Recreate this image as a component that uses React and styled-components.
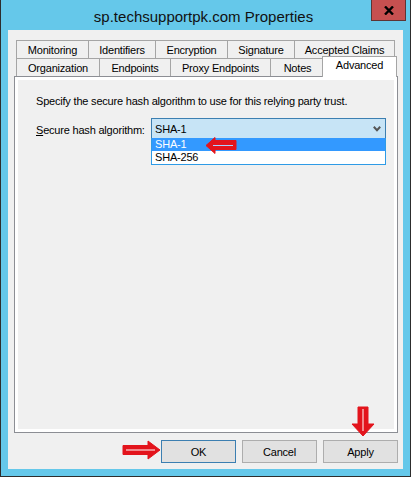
import React from 'react';
import styled, { createGlobalStyle } from 'styled-components';

const Global = createGlobalStyle`
  html, body { margin: 0; padding: 0; background: #65c8ea; }
  body { font-family: "Liberation Sans", Arial, sans-serif; color: #000; }
  * { box-sizing: border-box; }
`;

const Window = styled.div`
  width: 411px;
  height: 477px;
  background: #65c8ea;
  border: 1px solid #2d2d2d;
  border-top: none;
  display: flex;
  flex-direction: column;
`;

const TitleBar = styled.div`
  height: 30px;
  flex: none;
  display: grid;
  grid-template-columns: 1fr auto 1fr;
  padding-right: 4px;
`;

const Title = styled.div`
  grid-column: 2;
  align-self: center;
  padding-top: 2px;
  font-size: 15px;
  color: #111;
  white-space: nowrap;
`;

const CloseButton = styled.div`
  grid-column: 3;
  justify-self: end;
  align-self: start;
  width: 35px;
  height: 21px;
  background: #c75050;
  border: 1px solid #5e3434;
  border-top: none;
  display: flex;
  align-items: center;
  justify-content: center;
`;

const Client = styled.div`
  flex: 1;
  margin: 0 7px 7px;
  background: #f0f0f0;
  padding: 10px 5px 6px 6px;
  display: flex;
  flex-direction: column;
  position: relative;
  font-size: 11px;
  letter-spacing: -0.2px;
`;

const TabStrip = styled.div`
  padding-left: 2px;
  flex: none;
`;

const TabRow = styled.div`
  display: flex;
  align-items: flex-start;
  height: 18px;
`;

const Tab = styled.div`
  flex: none;
  width: ${p => p.$w}px;
  height: ${p => (p.$active ? 21 : 18)}px;
  margin-top: ${p => (p.$active ? -2 : 0)}px;
  border: 1px solid #a5a5a5;
  border-bottom: none;
  background: ${p => (p.$active ? '#fff' : '#f0f0f0')};
  display: flex;
  align-items: ${p => (p.$active ? 'flex-start' : 'center')};
  padding-top: ${p => (p.$active ? 2 : 0)}px;
  justify-content: center;
  white-space: nowrap;
  position: ${p => (p.$active ? 'relative' : 'static')};
  z-index: ${p => (p.$active ? 2 : 'auto')};
  &:not(:first-child) {
    margin-left: ${p => (p.$active ? -3 : -1)}px;
  }
`;

const Panel = styled.div`
  flex: 1;
  border: 1px solid #8c8e94;
  background: #fff;
  padding: 3px;
  display: flex;
`;

const PanelBody = styled.div`
  flex: 1;
  background: #f0f0f0;
  padding: 14px 0 0 18px;
`;

const Description = styled.div`
  line-height: 14px;
  margin-bottom: 10px;
  white-space: nowrap;
`;

const FieldRow = styled.div`
  display: grid;
  grid-template-columns: 115px 235px;
  align-items: center;
`;

const Label = styled.label`
  padding-top: 3px;
  white-space: nowrap;
`;

const Combo = styled.div`
  position: relative;
  height: 21px;
  border: 1px solid #3c7fb1;
  background: #c7e4f6;
  padding: 3px 0 0 3px;
  line-height: 14px;
`;

const Chevron = styled.svg`
  position: absolute;
  right: 4px;
  top: 7px;
`;

const DropList = styled.div`
  position: absolute;
  top: 100%;
  left: -1px;
  right: -1px;
  background: #fff;
  border: 1px solid #2e9be6;
  border-top: none;
  z-index: 3;
`;

const Option = styled.div`
  height: 13px;
  line-height: 13px;
  padding-left: 3px;
  background: ${p => (p.$selected ? '#3399ff' : '#fff')};
  color: ${p => (p.$selected ? '#fff' : '#000')};
`;

const ButtonRow = styled.div`
  flex: none;
  margin-top: 7px;
  display: flex;
  justify-content: flex-end;
  gap: 6px;
`;

const Button = styled.div`
  width: 75px;
  height: 23px;
  background: #e1e1e1;
  border: 1px solid ${p => (p.$primary ? '#3c7fb1' : '#adadad')};
  display: flex;
  align-items: center;
  justify-content: center;
`;

const Annotation = styled.svg`
  position: absolute;
  left: ${p => p.$x}px;
  top: ${p => p.$y}px;
  z-index: 5;
`;

const RED = '#e3141c';

const LeftArrow = () => (
  <Annotation $x={54} $y={-1} width="31" height="17" viewBox="0 0 31 17">
    <polygon points="0,8.5 9,0.5 9,3.5 30,3.5 30,12.5 9,12.5 9,16.5" fill={RED} stroke={RED} strokeLinejoin="round" />
    <line x1="7" y1="8.5" x2="27" y2="8.5" stroke="#a9d2ff" strokeWidth="1" />
  </Annotation>
);

const RightArrow = () => (
  <Annotation $x={114} $y={410} width="39" height="20" viewBox="0 0 39 20">
    <polygon points="1,5.5 26,5.5 26,1 38,10 26,19 26,14.5 1,14.5" fill={RED} stroke={RED} strokeLinejoin="round" />
    <line x1="4" y1="10" x2="33" y2="10" stroke="#fff" strokeWidth="1" />
  </Annotation>
);

const DownArrow = () => (
  <Annotation $x={343} $y={376} width="24" height="31" viewBox="0 0 24 31">
    <polygon points="7,1 17,1 17,18 23,18 12,30 1,18 7,18" fill={RED} stroke={RED} strokeLinejoin="round" />
    <line x1="12" y1="3" x2="12" y2="25" stroke="#fff" strokeWidth="1" />
  </Annotation>
);

const row1 = [
  ['Monitoring', 73],
  ['Identifiers', 68],
  ['Encryption', 73],
  ['Signature', 68],
  ['Accepted Claims', 101],
];

const row2 = [
  ['Organization', 84],
  ['Endpoints', 72],
  ['Proxy Endpoints', 101],
  ['Notes', 55],
];

export default function App() {
  return (
    <>
      <Global />
      <Window>
        <TitleBar>
          <Title>sp.techsupportpk.com Properties</Title>
          <CloseButton>
            <svg width="10" height="9" viewBox="0 0 10 9">
              <path d="M1 0.5 L9 8.5 M9 0.5 L1 8.5" stroke="#000" strokeWidth="2.4" />
            </svg>
          </CloseButton>
        </TitleBar>
        <Client>
          <TabStrip>
            <TabRow>
              {row1.map(([t, w]) => (
                <Tab key={t} $w={w}>{t}</Tab>
              ))}
            </TabRow>
            <TabRow>
              {row2.map(([t, w]) => (
                <Tab key={t} $w={w}>{t}</Tab>
              ))}
              <Tab $w={75} $active>Advanced</Tab>
            </TabRow>
          </TabStrip>
          <Panel>
            <PanelBody>
              <Description>Specify the secure hash algorithm to use for this relying party trust.</Description>
              <FieldRow>
                <Label><u>S</u>ecure hash algorithm:</Label>
                <Combo>
                  SHA-1
                  <Chevron width="8" height="6" viewBox="0 0 8 6">
                    <path d="M0.8 0.8 L4 4.2 L7.2 0.8" fill="none" stroke="#555" strokeWidth="2" />
                  </Chevron>
                  <DropList>
                    <Option $selected>SHA-1</Option>
                    <Option>SHA-256</Option>
                    <LeftArrow />
                  </DropList>
                </Combo>
              </FieldRow>
            </PanelBody>
          </Panel>
          <ButtonRow>
            <Button $primary>OK</Button>
            <Button>Cancel</Button>
            <Button>Apply</Button>
          </ButtonRow>
          <RightArrow />
          <DownArrow />
        </Client>
      </Window>
    </>
  );
}
